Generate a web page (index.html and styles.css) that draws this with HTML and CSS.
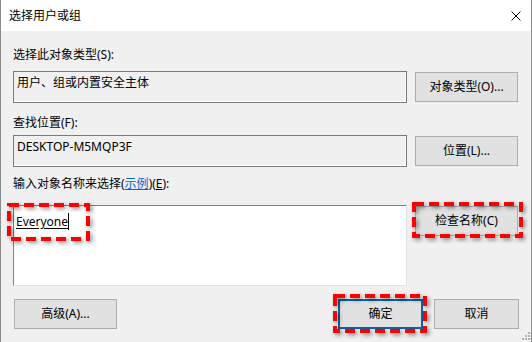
FILE: index.html
```html
<!DOCTYPE html>
<html lang="zh-CN">
<head>
    <meta charset="UTF-8">
    <meta name="viewport" content="width=device-width, initial-scale=1.0">
    <title>选择用户或组</title>
    <link rel="stylesheet" href="styles.css">
</head>
<body>

    <div class="window">
        <!-- Title bar -->
        <div class="titlebar">
            <span class="title">选择用户或组</span>
            <svg class="close" width="10" height="10" viewBox="0 0 10 10">
                <path d="M0.5 0.5L9.5 9.5M9.5 0.5L0.5 9.5" stroke="#000" stroke-width="1" fill="none"/>
            </svg>
        </div>

        <div class="content">
            <div class="label label-first">选择此对象类型(S):</div>
            <div class="row">
                <div class="field">用户、组或内置安全主体</div>
                <button class="btn">对象类型(O)...</button>
            </div>

            <div class="label label-second">查找位置(F):</div>
            <div class="row">
                <div class="field">DESKTOP-M5MQP3F</div>
                <button class="btn">位置(L)...</button>
            </div>

            <div class="label label-third">输入对象名称来选择(<span class="link">示例</span>)(<u>E</u>):</div>
            <div class="row">
                <div class="names"><span class="entered">Everyone</span><span class="caret"></span></div>
                <button class="btn">检查名称(C)</button>
            </div>

            <div class="actions">
                <button class="btn btn-wide">高级(A)...</button>
                <div class="actions-right">
                    <button class="btn btn-small btn-default">确定</button>
                    <button class="btn btn-small">取消</button>
                </div>
            </div>
        </div>

        <!-- red marks drawn over the dialog -->
        <svg class="mark mark-names" width="83" height="38" viewBox="0 0 83 38">
            <rect x="2" y="2" width="79" height="34" fill="none" stroke="#f00" stroke-width="4" stroke-dasharray="10 5"/>
        </svg>
        <svg class="mark mark-check" width="111" height="36" viewBox="0 0 111 36">
            <rect x="2" y="2" width="107" height="32" fill="none" stroke="#f00" stroke-width="4" stroke-dasharray="10 5"/>
        </svg>
        <svg class="mark mark-ok" width="94" height="39" viewBox="0 0 94 39">
            <rect x="2" y="2" width="90" height="35" fill="none" stroke="#f00" stroke-width="4" stroke-dasharray="10 5"/>
        </svg>

        <svg class="grip" width="9" height="9" viewBox="0 0 9 9">
            <rect x="7" y="1" width="2" height="2" fill="#b4b4b4"/>
            <rect x="4" y="4" width="2" height="2" fill="#b4b4b4"/>
            <rect x="7" y="4" width="2" height="2" fill="#b4b4b4"/>
            <rect x="1" y="7" width="2" height="2" fill="#b4b4b4"/>
            <rect x="4" y="7" width="2" height="2" fill="#b4b4b4"/>
            <rect x="7" y="7" width="2" height="2" fill="#b4b4b4"/>
        </svg>
    </div>

</body>
</html>
```

FILE: styles.css
```css
body {
    margin: 0;
    font-family: "Noto Sans", "Noto Sans CJK SC", sans-serif;
    font-size: 12px;
    color: #000;
    background-color: #f0f0f0;
}

.window {
    position: relative;
    width: 532px;
    height: 342px;
    box-sizing: border-box;
    border-left: 1px solid #8a8a8a;
    border-right: 1px solid #8a8a8a;
    display: flex;
    flex-direction: column;
    overflow: hidden;
}

.titlebar {
    height: 31px;
    background-color: #fff;
    display: flex;
    align-items: center;
    justify-content: space-between;
    padding: 0 10px 0 8px;
    flex-shrink: 0;
}

.title {
    font-size: 12px;
    line-height: 16px;
}

.content {
    flex: 1;
    background-color: #f0f0f0;
    padding: 16px 12px 0 12px;
}

.label {
    line-height: 16px;
    white-space: nowrap;
}

.label-first {
    margin-bottom: 8px;
}

.label-second {
    margin-top: 12px;
    margin-bottom: 4px;
}

.label-third {
    margin-top: 9px;
    margin-bottom: 13px;
}

.link {
    color: #0066cc;
    text-decoration: underline;
}

.row {
    display: grid;
    grid-template-columns: 394px 103px;
    column-gap: 8px;
    align-items: start;
}

.field {
    height: 32px;
    box-sizing: border-box;
    border: 1px solid #7a7a7a;
    box-shadow: inset -1px -1px 0 #fff;
    padding: 3px 3px;
    line-height: 16px;
    background-color: #f0f0f0;
    white-space: nowrap;
}

.names {
    height: 81px;
    box-sizing: border-box;
    background-color: #fff;
    border-top: 1px solid #828282;
    border-left: 1px solid #828282;
    border-right: 1px solid #e3e3e3;
    border-bottom: 1px solid #e3e3e3;
    padding: 8px 2px;
    line-height: 16px;
    display: flex;
    align-items: center;
    align-self: start;
    height: 81px;
}

.names {
    align-items: flex-start;
}

.entered {
    text-decoration: underline;
    text-underline-offset: 2px;
}

.caret {
    display: inline-block;
    width: 1px;
    height: 17px;
    margin-top: -1px;
    background-color: #000;
}

.btn {
    height: 30px;
    margin-top: 1px;
    box-sizing: border-box;
    border: 1px solid #adadad;
    background-color: #e1e1e1;
    font-family: "Noto Sans", "Noto Sans CJK SC", sans-serif;
    font-size: 12px;
    color: #000;
    padding: 0;
    line-height: 16px;
    white-space: nowrap;
}

.actions {
    margin-top: 13px;
    display: flex;
    justify-content: space-between;
    align-items: center;
}

.actions .btn {
    margin-top: 0;
}

.btn-wide {
    width: 103px;
    margin-left: 1px;
}

.actions-right {
    display: flex;
    gap: 11px;
}

.btn-small {
    width: 85px;
}

.btn-default {
    border: 2px solid #0a64ad;
}

.mark {
    position: absolute;
    filter: drop-shadow(2px 2px 2px rgba(0, 0, 0, 0.45));
}

.mark-names {
    left: 6px;
    top: 203px;
}

.mark-check {
    left: 411px;
    top: 202px;
}

.mark-ok {
    left: 332px;
    top: 294px;
}

.grip {
    position: absolute;
    right: 1px;
    bottom: 2px;
}
```
